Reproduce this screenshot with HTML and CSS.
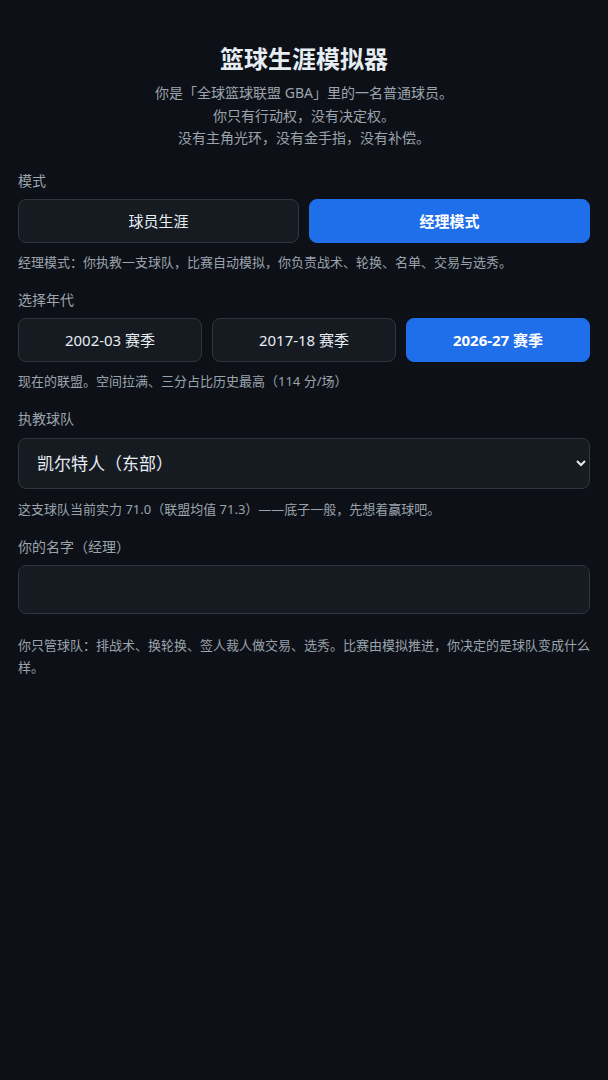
FILE: index.html
```html
<!DOCTYPE html>
<html lang="zh-CN">
<head>
<meta charset="utf-8">
<title>篮球生涯模拟器</title>
<link rel="stylesheet" href="styles.css">
</head>
<body>
<main class="app">
  <h1 class="title">篮球生涯模拟器</h1>
  <p class="intro">你是「全球篮球联盟 GBA」里的一名普通球员。<br>你只有行动权，没有决定权。<br>没有主角光环，没有金手指，没有补偿。</p>

  <section class="field">
    <div class="label">模式</div>
    <div class="choices two">
      <button class="choice">球员生涯</button>
      <button class="choice active">经理模式</button>
    </div>
    <div class="hint">经理模式：你执教一支球队，比赛自动模拟，你负责战术、轮换、名单、交易与选秀。</div>
  </section>

  <section class="field">
    <div class="label">选择年代</div>
    <div class="choices three">
      <button class="choice">2002-03 赛季</button>
      <button class="choice">2017-18 赛季</button>
      <button class="choice active">2026-27 赛季</button>
    </div>
    <div class="hint">现在的联盟。空间拉满、三分占比历史最高（114 分/场）</div>
  </section>

  <section class="field">
    <div class="label label-select">执教球队</div>
    <select class="select">
      <option>凯尔特人（东部）</option>
    </select>
    <div class="hint hint-wide">这支球队当前实力 71.0（联盟均值 71.3）——底子一般，先想着赢球吧。</div>
  </section>

  <section class="field">
    <div class="label">你的名字（经理）</div>
    <input class="input" type="text">
  </section>

  <p class="footer">你只管球队：排战术、换轮换、签人裁人做交易、选秀。比赛由模拟推进，你决定的是球队变成什么样。</p>
</main>
</body>
</html>
```
FILE: styles.css
```css
html, body {
  margin: 0;
  padding: 0;
  background: #0d1117;
  color: #e6edf3;
  font-family: "Noto Sans", "Noto Sans CJK SC", sans-serif;
  color-scheme: dark;
}
.app {
  padding: 44px 18px 40px;
}
.title {
  margin: 0 0 8px;
  text-align: center;
  font-size: 24px;
  line-height: 30px;
  font-weight: 700;
  color: #e6edf3;
}
.intro {
  margin: 0 0 21px;
  text-align: center;
  font-size: 14px;
  line-height: 22.5px;
  color: #9ba3ad;
}
.field {
  margin-bottom: 18px;
}
.label {
  font-size: 14px;
  line-height: 20px;
  color: #9ba3ad;
  margin-bottom: 8px;
}
.label-select {
  margin-bottom: 9px;
}
.choices {
  display: grid;
  gap: 10px;
}
.choices.two { grid-template-columns: 1fr 1fr; }
.choices.three { grid-template-columns: 1fr 1fr 1fr; }
.choice {
  height: 44px;
  border: 1px solid #30363d;
  border-radius: 8px;
  background: #161b22;
  color: #e6edf3;
  font-family: inherit;
  font-size: 15px;
  padding: 0;
}
.choice.active {
  background: #1f6feb;
  border-color: #1f6feb;
  color: #ffffff;
  font-weight: 700;
}
.hint {
  margin-top: 9px;
  font-size: 13px;
  line-height: 20px;
  color: #9ba3ad;
}
.hint-wide {
  margin-top: 10px;
}
.select {
  display: block;
  width: 100%;
  height: 51px;
  padding: 0 12px 0 14px;
  border: 1px solid #30363d;
  border-radius: 8px;
  background-color: #161b22;
  color: #e6edf3;
  font-family: inherit;
  font-size: 17px;
}
.input {
  display: block;
  box-sizing: border-box;
  width: 100%;
  height: 49px;
  border: 1px solid #30363d;
  border-radius: 8px;
  background: #161b22;
  color: #e6edf3;
  font-family: inherit;
  font-size: 16px;
  padding: 0 14px;
}
.footer {
  margin: 20px 0 0;
  font-size: 13px;
  line-height: 22px;
  color: #9ba3ad;
}
```
